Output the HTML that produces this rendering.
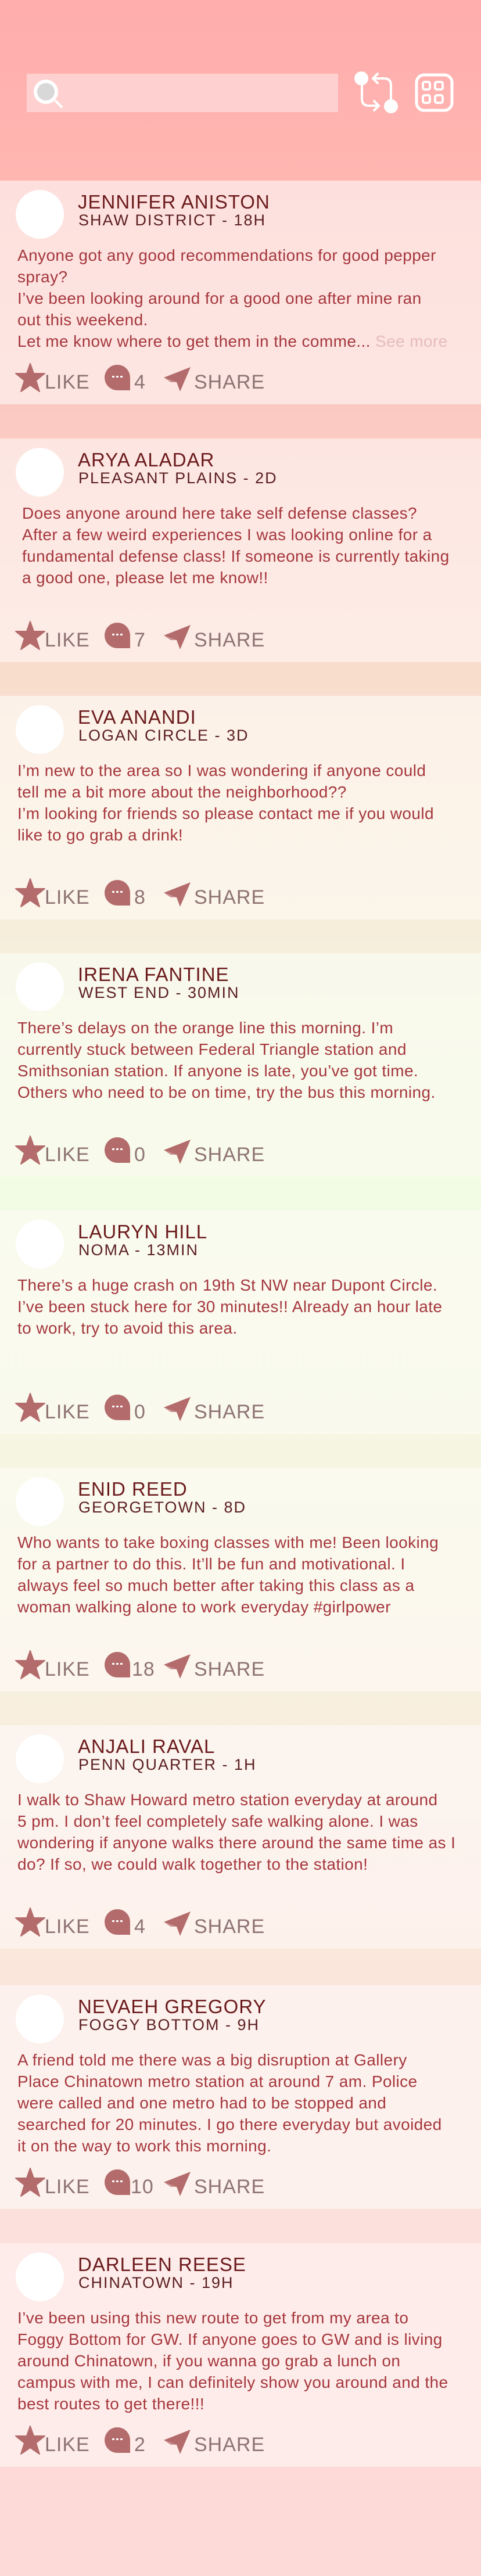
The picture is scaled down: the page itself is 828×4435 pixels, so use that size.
<!DOCTYPE html>
<html><head><meta charset="utf-8">
<style>
*{margin:0;padding:0;box-sizing:border-box}
body{width:828px;height:4435px;position:relative;overflow:hidden;font-family:"Liberation Sans",sans-serif;
background:linear-gradient(to bottom,#fbc9c2 700px,#f8dccc 1150px,#f6eedb 1600px,#f2fce4 2050px,#f6f5e2 2500px,#f8efdf 2950px,#fbe6db 3400px,#fce0db 3850px,#fdd9d8 4250px)}
.hdr{position:absolute;left:0;top:0;width:828px;height:311px;background:linear-gradient(#ffadad,#ffb6b1)}
.search{position:absolute;left:46px;top:127px;width:536px;height:66px;background:#ffd0d0}
.card{position:absolute;left:0;width:828px;height:385px}
.av{position:absolute;left:27px;top:16px;width:83px;height:84px;border-radius:50%;background:#fff}
.nm{position:absolute;left:134px;top:17px;font-size:33px;color:#6b1a1c;letter-spacing:1px;white-space:nowrap;line-height:40px}
.sub{position:absolute;left:135px;top:52px;font-size:27px;color:#5a1e20;letter-spacing:2px;white-space:nowrap;line-height:32px}
.body{position:absolute;left:30px;top:110px;font-size:28px;letter-spacing:0.4px;line-height:37px;color:#a5373d;white-space:nowrap}
.more{color:#e5bcbc}
.act{position:absolute;left:0;top:314px;width:828px;height:60px}
.star{position:absolute;left:26px;top:0}
.lbl{position:absolute;font-size:34px;color:#8e7373;top:13px;line-height:40px;letter-spacing:1px}
.bub{position:absolute;left:180px;top:3px;width:44px;height:44px;background:#b36b6b;border-radius:22px 22px 0 22px}
.bub::after{content:"";position:absolute;left:13px;top:19px;width:4px;height:3px;background:#fff;box-shadow:7px 0 #fff,14px 0 #fff}
.plane{position:absolute;left:282px;top:7px}
</style></head><body>
<div class="hdr">
 <div class="search"></div>
 <svg style="position:absolute;left:0;top:0" width="828" height="311">
  <line x1="96" y1="174" x2="106" y2="184" stroke="#fff" stroke-width="4" stroke-linecap="round"/>
  <circle cx="79" cy="158" r="18" fill="#d8d8d8" stroke="#fff" stroke-width="6"/>
  <circle cx="622" cy="135" r="12" fill="#fff"/>
  <circle cx="673" cy="183" r="12" fill="#fff"/>
  <path d="M623 140 V170 Q623 182 635 182 H652 M644 174 L652 182 L644 190" fill="none" stroke="#fff" stroke-width="4" stroke-linecap="round" stroke-linejoin="round"/>
  <path d="M673 178 V147 Q673 135 661 135 H642 M650 127 L642 135 L650 143" fill="none" stroke="#fff" stroke-width="4" stroke-linecap="round" stroke-linejoin="round"/>
  <rect x="717" y="129" width="61" height="61" rx="13" fill="none" stroke="#fff" stroke-width="5"/>
  <rect x="728" y="141" width="12" height="13" rx="3" fill="none" stroke="#fff" stroke-width="4"/>
  <rect x="749" y="141" width="13" height="13" rx="3" fill="none" stroke="#fff" stroke-width="4"/>
  <rect x="728" y="164" width="12" height="13" rx="3" fill="none" stroke="#fff" stroke-width="4"/>
  <rect x="749" y="164" width="13" height="13" rx="3" fill="none" stroke="#fff" stroke-width="4"/>
 </svg>
</div>

<div class="card" style="top:311px;background:linear-gradient(#fde0dd,#fde6e2)">
 <div class="av"></div><div class="nm">JENNIFER ANISTON</div><div class="sub">SHAW DISTRICT - 18H</div>
 <div class="body">Anyone got any good recommendations for good pepper<br>spray?<br>I’ve been looking around for a good one after mine ran<br>out this weekend.<br>Let me know where to get them in the comme... <span class="more">See more</span></div>
 <div class="act"><svg class="star" width="52" height="50" viewBox="0 0 52 50"><polygon points="26,1 32,18 51,18 36,30 42,49 26,38 10,49 16,30 1,18 20,18" fill="#b36b6b" stroke="#b36b6b" stroke-width="2" stroke-linejoin="round"/></svg><div class="lbl" style="left:77px">LIKE</div><div class="bub"></div><div class="lbl" style="left:231px">4</div><svg class="plane" width="48" height="44" viewBox="0 0 48 44"><polygon points="0,18 46,0 28,42 22,26" fill="#b36b6b"/><polygon points="0,18 22,26 12,26" fill="#c98f8f"/></svg><div class="lbl" style="left:334px">SHARE</div></div>
</div>

<div class="card" style="top:755px;background:linear-gradient(#fde6e2,#fdece6)">
 <div class="av"></div><div class="nm">ARYA ALADAR</div><div class="sub">PLEASANT PLAINS - 2D</div>
 <div class="body" style="left:38px">Does anyone around here take self defense classes?<br>After a few weird experiences I was looking online for a<br>fundamental defense class! If someone is currently taking<br>a good one, please let me know!!</div>
 <div class="act"><svg class="star" width="52" height="50" viewBox="0 0 52 50"><polygon points="26,1 32,18 51,18 36,30 42,49 26,38 10,49 16,30 1,18 20,18" fill="#b36b6b" stroke="#b36b6b" stroke-width="2" stroke-linejoin="round"/></svg><div class="lbl" style="left:77px">LIKE</div><div class="bub"></div><div class="lbl" style="left:231px">7</div><svg class="plane" width="48" height="44" viewBox="0 0 48 44"><polygon points="0,18 46,0 28,42 22,26" fill="#b36b6b"/><polygon points="0,18 22,26 12,26" fill="#c98f8f"/></svg><div class="lbl" style="left:334px">SHARE</div></div>
</div>

<div class="card" style="top:1198px;background:linear-gradient(#fcf1e8,#fbf5ea)">
 <div class="av"></div><div class="nm">EVA ANANDI</div><div class="sub">LOGAN CIRCLE - 3D</div>
 <div class="body">I’m new to the area so I was wondering if anyone could<br>tell me a bit more about the neighborhood??<br>I’m looking for friends so please contact me if you would<br>like to go grab a drink!</div>
 <div class="act"><svg class="star" width="52" height="50" viewBox="0 0 52 50"><polygon points="26,1 32,18 51,18 36,30 42,49 26,38 10,49 16,30 1,18 20,18" fill="#b36b6b" stroke="#b36b6b" stroke-width="2" stroke-linejoin="round"/></svg><div class="lbl" style="left:77px">LIKE</div><div class="bub"></div><div class="lbl" style="left:231px">8</div><svg class="plane" width="48" height="44" viewBox="0 0 48 44"><polygon points="0,18 46,0 28,42 22,26" fill="#b36b6b"/><polygon points="0,18 22,26 12,26" fill="#c98f8f"/></svg><div class="lbl" style="left:334px">SHARE</div></div>
</div>

<div class="card" style="top:1641px;background:linear-gradient(#f9f8ec,#f8fbeb)">
 <div class="av"></div><div class="nm">IRENA FANTINE</div><div class="sub">WEST END - 30MIN</div>
 <div class="body">There’s delays on the orange line this morning. I’m<br>currently stuck between Federal Triangle station and<br>Smithsonian station. If anyone is late, you’ve got time.<br>Others who need to be on time, try the bus this morning.</div>
 <div class="act"><svg class="star" width="52" height="50" viewBox="0 0 52 50"><polygon points="26,1 32,18 51,18 36,30 42,49 26,38 10,49 16,30 1,18 20,18" fill="#b36b6b" stroke="#b36b6b" stroke-width="2" stroke-linejoin="round"/></svg><div class="lbl" style="left:77px">LIKE</div><div class="bub"></div><div class="lbl" style="left:231px">0</div><svg class="plane" width="48" height="44" viewBox="0 0 48 44"><polygon points="0,18 46,0 28,42 22,26" fill="#b36b6b"/><polygon points="0,18 22,26 12,26" fill="#c98f8f"/></svg><div class="lbl" style="left:334px">SHARE</div></div>
</div>

<div class="card" style="top:2084px;background:linear-gradient(#fafbef,#f9f9ee)">
 <div class="av"></div><div class="nm">LAURYN HILL</div><div class="sub">NOMA - 13MIN</div>
 <div class="body">There’s a huge crash on 19th St NW near Dupont Circle.<br>I’ve been stuck here for 30 minutes!! Already an hour late<br>to work, try to avoid this area.</div>
 <div class="act"><svg class="star" width="52" height="50" viewBox="0 0 52 50"><polygon points="26,1 32,18 51,18 36,30 42,49 26,38 10,49 16,30 1,18 20,18" fill="#b36b6b" stroke="#b36b6b" stroke-width="2" stroke-linejoin="round"/></svg><div class="lbl" style="left:77px">LIKE</div><div class="bub"></div><div class="lbl" style="left:231px">0</div><svg class="plane" width="48" height="44" viewBox="0 0 48 44"><polygon points="0,18 46,0 28,42 22,26" fill="#b36b6b"/><polygon points="0,18 22,26 12,26" fill="#c98f8f"/></svg><div class="lbl" style="left:334px">SHARE</div></div>
</div>

<div class="card" style="top:2527px;background:linear-gradient(#fafaee,#fcf6ee)">
 <div class="av"></div><div class="nm">ENID REED</div><div class="sub">GEORGETOWN - 8D</div>
 <div class="body">Who wants to take boxing classes with me! Been looking<br>for a partner to do this. It’ll be fun and motivational. I<br>always feel so much better after taking this class as a<br>woman walking alone to work everyday #girlpower</div>
 <div class="act"><svg class="star" width="52" height="50" viewBox="0 0 52 50"><polygon points="26,1 32,18 51,18 36,30 42,49 26,38 10,49 16,30 1,18 20,18" fill="#b36b6b" stroke="#b36b6b" stroke-width="2" stroke-linejoin="round"/></svg><div class="lbl" style="left:77px">LIKE</div><div class="bub"></div><div class="lbl" style="left:227px">18</div><svg class="plane" width="48" height="44" viewBox="0 0 48 44"><polygon points="0,18 46,0 28,42 22,26" fill="#b36b6b"/><polygon points="0,18 22,26 12,26" fill="#c98f8f"/></svg><div class="lbl" style="left:334px">SHARE</div></div>
</div>

<div class="card" style="top:2970px;background:linear-gradient(#fcf5ef,#fdf1ec)">
 <div class="av"></div><div class="nm">ANJALI RAVAL</div><div class="sub">PENN QUARTER - 1H</div>
 <div class="body">I walk to Shaw Howard metro station everyday at around<br>5 pm. I don’t feel completely safe walking alone. I was<br>wondering if anyone walks there around the same time as I<br>do? If so, we could walk together to the station!</div>
 <div class="act"><svg class="star" width="52" height="50" viewBox="0 0 52 50"><polygon points="26,1 32,18 51,18 36,30 42,49 26,38 10,49 16,30 1,18 20,18" fill="#b36b6b" stroke="#b36b6b" stroke-width="2" stroke-linejoin="round"/></svg><div class="lbl" style="left:77px">LIKE</div><div class="bub"></div><div class="lbl" style="left:231px">4</div><svg class="plane" width="48" height="44" viewBox="0 0 48 44"><polygon points="0,18 46,0 28,42 22,26" fill="#b36b6b"/><polygon points="0,18 22,26 12,26" fill="#c98f8f"/></svg><div class="lbl" style="left:334px">SHARE</div></div>
</div>

<div class="card" style="top:3418px;background:#fdf1ed">
 <div class="av"></div><div class="nm">NEVAEH GREGORY</div><div class="sub">FOGGY BOTTOM - 9H</div>
 <div class="body">A friend told me there was a big disruption at Gallery<br>Place Chinatown metro station at around 7 am. Police<br>were called and one metro had to be stopped and<br>searched for 20 minutes. I go there everyday but avoided<br>it on the way to work this morning.</div>
 <div class="act"><svg class="star" width="52" height="50" viewBox="0 0 52 50"><polygon points="26,1 32,18 51,18 36,30 42,49 26,38 10,49 16,30 1,18 20,18" fill="#b36b6b" stroke="#b36b6b" stroke-width="2" stroke-linejoin="round"/></svg><div class="lbl" style="left:77px">LIKE</div><div class="bub"></div><div class="lbl" style="left:225px">10</div><svg class="plane" width="48" height="44" viewBox="0 0 48 44"><polygon points="0,18 46,0 28,42 22,26" fill="#b36b6b"/><polygon points="0,18 22,26 12,26" fill="#c98f8f"/></svg><div class="lbl" style="left:334px">SHARE</div></div>
</div>

<div class="card" style="top:3862px;background:#feecea">
 <div class="av"></div><div class="nm">DARLEEN REESE</div><div class="sub">CHINATOWN - 19H</div>
 <div class="body">I’ve been using this new route to get from my area to<br>Foggy Bottom for GW. If anyone goes to GW and is living<br>around Chinatown, if you wanna go grab a lunch on<br>campus with me, I can definitely show you around and the<br>best routes to get there!!!</div>
 <div class="act"><svg class="star" width="52" height="50" viewBox="0 0 52 50"><polygon points="26,1 32,18 51,18 36,30 42,49 26,38 10,49 16,30 1,18 20,18" fill="#b36b6b" stroke="#b36b6b" stroke-width="2" stroke-linejoin="round"/></svg><div class="lbl" style="left:77px">LIKE</div><div class="bub"></div><div class="lbl" style="left:231px">2</div><svg class="plane" width="48" height="44" viewBox="0 0 48 44"><polygon points="0,18 46,0 28,42 22,26" fill="#b36b6b"/><polygon points="0,18 22,26 12,26" fill="#c98f8f"/></svg><div class="lbl" style="left:334px">SHARE</div></div>
</div>
<div style="position:absolute;left:0;top:4247px;width:828px;height:188px;background:#fdd9d8"></div>
</body></html>
